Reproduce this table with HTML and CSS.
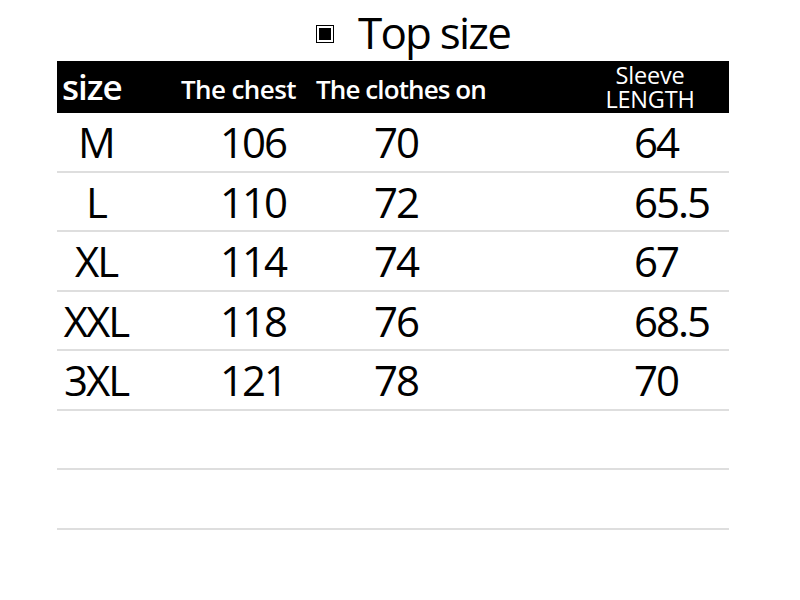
FILE: index.html
```html
<!DOCTYPE html>
<html>
<head>
<meta charset="utf-8">
<link rel="stylesheet" href="styles.css">
</head>
<body>
<div class="page">
  <h1 class="title"><span class="bullet"></span><span class="title-text">Top size</span></h1>
  <div class="table">
    <div class="row head">
      <div class="c1 h-size">size</div>
      <div class="c2 h-chest">The chest</div>
      <div class="c3 h-clothes">The clothes on</div>
      <div class="c4 h-sleeve"><div class="sl">Sleeve</div><div class="sl">LENGTH</div></div>
    </div>
    <div class="row"><div class="c1 sz">M</div><div class="c2 num">106</div><div class="c3 num">70</div><div class="c4 num">64</div></div>
    <div class="row"><div class="c1 sz">L</div><div class="c2 num">110</div><div class="c3 num">72</div><div class="c4 num">65.5</div></div>
    <div class="row"><div class="c1 sz">XL</div><div class="c2 num">114</div><div class="c3 num">74</div><div class="c4 num">67</div></div>
    <div class="row"><div class="c1 sz">XXL</div><div class="c2 num">118</div><div class="c3 num">76</div><div class="c4 num">68.5</div></div>
    <div class="row"><div class="c1 sz">3XL</div><div class="c2 num">121</div><div class="c3 num">78</div><div class="c4 num">70</div></div>
    <div class="row"></div>
    <div class="row"></div>
  </div>
</div>
</body>
</html>
```
FILE: styles.css
```css
html, body {
  margin: 0;
  padding: 0;
  background: #fff;
}
body {
  font-family: "Open Sans", "Noto Sans", sans-serif;
  color: #000;
  width: 800px;
  height: 600px;
  overflow: hidden;
}
.page {
  padding: 0 71px 0 57px;
}
.title {
  margin: 0;
  height: 61px;
  display: flex;
  align-items: center;
  padding-left: 260px;
  font-weight: 400;
}
.bullet {
  width: 12px;
  height: 12px;
  background: #000;
  border: 2px solid #fff;
  outline: 1.5px solid #000;
  margin-right: 25px;
  margin-top: 6px;
}
.title-text {
  font-size: 44px;
  letter-spacing: -1.8px;
  line-height: 1;
  margin-top: 2px;
}
.table {
  width: 672px;
}
.row {
  display: grid;
  grid-template-columns: 78px 170px 255px 169px;
  height: 57.5px;
  align-items: center;
  border-bottom: 2px solid #dedede;
}
.row.head {
  background: #000;
  color: #fff;
  height: 52px;
  border-bottom: 0;
}
.h-size {
  font-size: 35px;
  font-weight: 600;
  padding-left: 5px;
  letter-spacing: -1px;
  margin-top: -2px;
}
.h-chest {
  font-size: 26px;
  font-weight: 600;
  padding-left: 46px;
  letter-spacing: -0.6px;
  margin-top: 4px;
}
.h-clothes {
  font-size: 26px;
  font-weight: 600;
  padding-left: 11px;
  letter-spacing: -0.9px;
  margin-top: 4px;
}
.h-sleeve {
  display: flex;
  flex-direction: column;
  align-items: center;
  padding-left: 11px;
  font-size: 23.5px;
  letter-spacing: -0.2px;
}
.sl {
  line-height: 24px;
}
.sz {
  font-size: 42px;
  text-align: center;
  letter-spacing: -2px;
}
.num {
  font-size: 42px;
  letter-spacing: -2px;
}
.c2.num { padding-left: 85px; }
.c3.num { padding-left: 69px; }
.c4.num { padding-left: 74px; }
```
